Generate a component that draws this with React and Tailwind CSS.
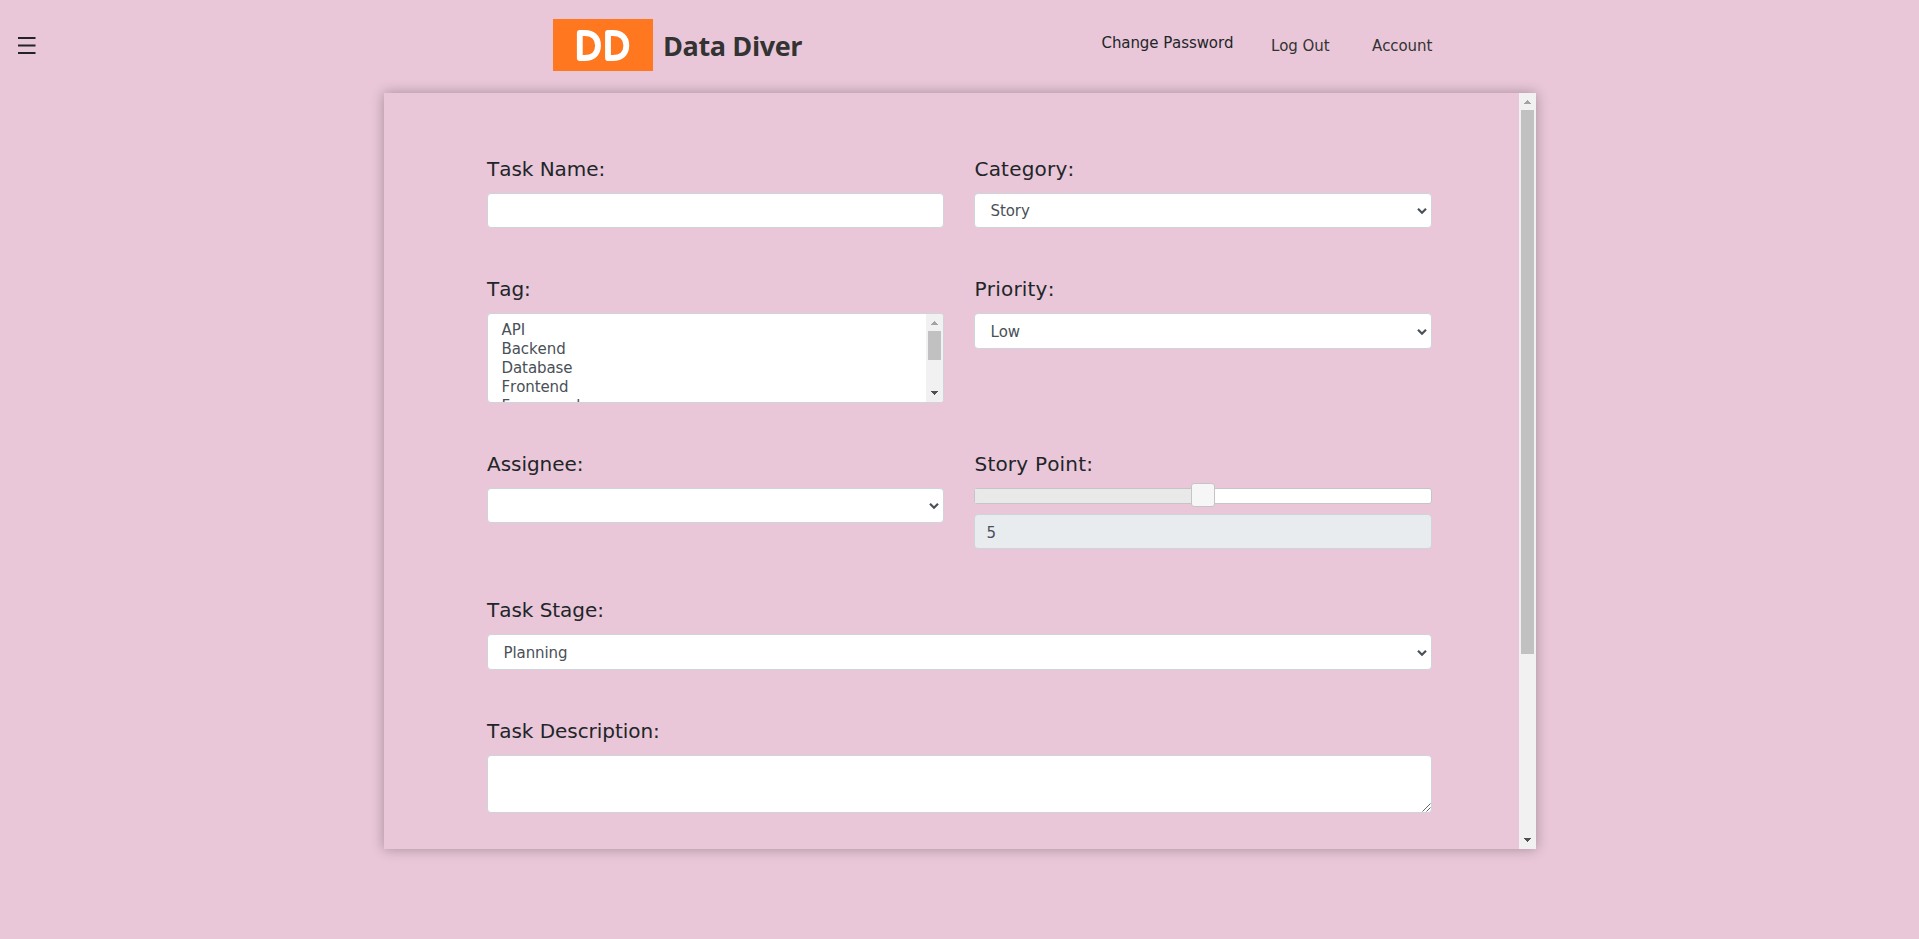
const fieldBox =
  "box-border w-full rounded-[4px] border border-[#ced4da] bg-white text-[15px] leading-[22px] tracking-[-0.08px] text-[#495057]";

const tags = ["API", "Backend", "Database", "Frontend", "Framework"];

function Label({ children, wide }) {
  return (
    <div
      className={`mb-[9px] h-[30px] text-[20px] leading-[30px] whitespace-nowrap text-[#212529] ${
        wide ? "pl-[0.5px] tracking-[0.2px]" : "tracking-[-0.04px]"
      }`}
    >
      {children}
    </div>
  );
}

function Chevron() {
  return (
    <svg className="h-[10px] w-[10px] shrink-0" viewBox="0 0 10 10" fill="none">
      <path d="M1 2.8L5 6.8L9 2.8" stroke="#495057" strokeWidth="2.2" />
    </svg>
  );
}

function Select({ value, tall }) {
  return (
    <div
      className={`${fieldBox} flex items-center justify-between pr-[4px] pl-[15.5px] ${
        tall ? "h-[36px] pt-[2px]" : "h-[35px]"
      }`}
    >
      <span>{value}</span>
      <Chevron />
    </div>
  );
}

function Scrollbar({ thumb }) {
  return (
    <div className="flex w-[17px] shrink-0 flex-col items-center bg-[#f1f1f1]">
      <svg className="h-[17px] w-[17px] shrink-0" viewBox="0 0 17 17" shapeRendering="crispEdges">
        <path d="M5 11H12V10H11V9H10V8H9V7H8V8H7V9H6V10H5Z" fill="#a3a3a3" />
      </svg>
      <div className={`w-[13px] bg-[#c1c1c1] ${thumb}`} />
      <div className="grow" />
      <svg className="h-[17px] w-[17px] shrink-0" viewBox="0 0 17 17" shapeRendering="crispEdges">
        <path d="M5 6H12V7H11V8H10V9H9V10H8V9H7V8H6V7H5Z" fill="#505050" />
      </svg>
    </div>
  );
}

function Logo() {
  return (
    <svg className="h-[52px] w-[100px]" viewBox="0 0 100 52">
      <rect width="100" height="52" fill="#ff781f" />
      <g fill="none" stroke="#fff" strokeWidth="5.8" strokeLinejoin="round">
        <path d="M26.8 14H31.5C40 14 45 18.5 45 26.5S40 39 31.5 39H26.8Z" />
        <path d="M55 14H59.7C68.2 14 73.3 18.5 73.3 26.5S68.2 39 59.7 39H55Z" />
      </g>
    </svg>
  );
}

export default function App() {
  return (
    <div className="h-[939px] w-full overflow-hidden bg-[#e9c7d8] font-['DejaVu_Sans',sans-serif] [font-kerning:none]">
      <header className="flex h-[93px] items-start text-[15px] leading-[22px] tracking-[-0.08px] text-[#333]">
        <div className="mt-[36px] ml-[18px] w-[18px]">
          <svg className="h-[20px] w-[18px]" viewBox="0 0 18 20">
            <path d="M0 2H17.5M0 9.5H17.5M0 17H17.5" stroke="#212529" strokeWidth="2" />
          </svg>
        </div>
        <div className="mt-[19px] ml-[517px] flex h-[52px] w-[548px] items-center">
          <Logo />
          <span className="ml-[10px] pt-[2px] font-['Open_Sans',sans-serif] text-[27px] leading-[40px] font-bold tracking-[-0.4px] whitespace-nowrap">
            Data Diver
          </span>
        </div>
        <nav className="flex whitespace-nowrap">
          <span className="mt-[32px] w-[170px] pl-[0.5px] text-[#212529]">Change Password</span>
          <span className="mt-[35px] w-[101px]">Log Out</span>
          <span className="mt-[35px]">Account</span>
        </nav>
      </header>

      <main className="ml-[384px] flex h-[756px] w-[1152px] shadow-[0_0_12px_rgba(0,0,0,0.3)]">
        <form className="w-[1135px] overflow-hidden pt-[61px] pr-[87px] pl-[103px]">
          <div className="grid grid-cols-[457px_458px] grid-rows-[120px_175px_146px] gap-x-[30px]">
            <div>
              <Label>Task Name:</Label>
              <div className={`${fieldBox} h-[35px]`} />
            </div>
            <div>
              <Label wide>Category:</Label>
              <Select value="Story" />
            </div>
            <div>
              <Label>Tag:</Label>
              <div className={`${fieldBox} flex h-[90px] justify-between overflow-hidden`}>
                <div className="pt-[7px] pl-[13.5px]">
                  {tags.map((t) => (
                    <div key={t} className="h-[19px] leading-[19px]">
                      {t}
                    </div>
                  ))}
                </div>
                <Scrollbar thumb="h-[29px]" />
              </div>
            </div>
            <div>
              <Label wide>Priority:</Label>
              <Select value="Low" tall />
            </div>
            <div>
              <Label>Assignee:</Label>
              <Select value="" />
            </div>
            <div>
              <Label wide>Story Point:</Label>
              <div className="relative h-[16px] rounded-[3px] border border-[#c5c5c5] bg-white">
                <div className="h-full w-1/2 bg-[#e9e9e9]" />
                <div className="absolute -top-[6px] left-1/2 h-[24px] w-[24px] -translate-x-1/2 rounded-[3px] border border-[#c5c5c5] bg-[#f6f6f6]" />
              </div>
              <div className="mt-[10px] flex h-[35px] items-center rounded-[4px] border border-[#ced4da] bg-[#e9ecef] pt-[2px] pl-[11.5px] text-[15px] leading-[22px] text-[#495057]">
                5
              </div>
            </div>
          </div>
          <div className="h-[121px]">
            <Label>Task Stage:</Label>
            <Select value="Planning" tall />
          </div>
          <div>
            <Label>Task Description:</Label>
            <div className={`${fieldBox} flex h-[58px] items-end justify-end`}>
              <svg className="h-[9px] w-[9px]" viewBox="0 0 9 9">
                <path d="M0.5 8.5L8.5 0.5M4.5 8.5L8.5 4.5" stroke="#555" strokeWidth="0.9" />
              </svg>
            </div>
          </div>
        </form>
        <Scrollbar thumb="h-[544px]" />
      </main>
    </div>
  );
}
